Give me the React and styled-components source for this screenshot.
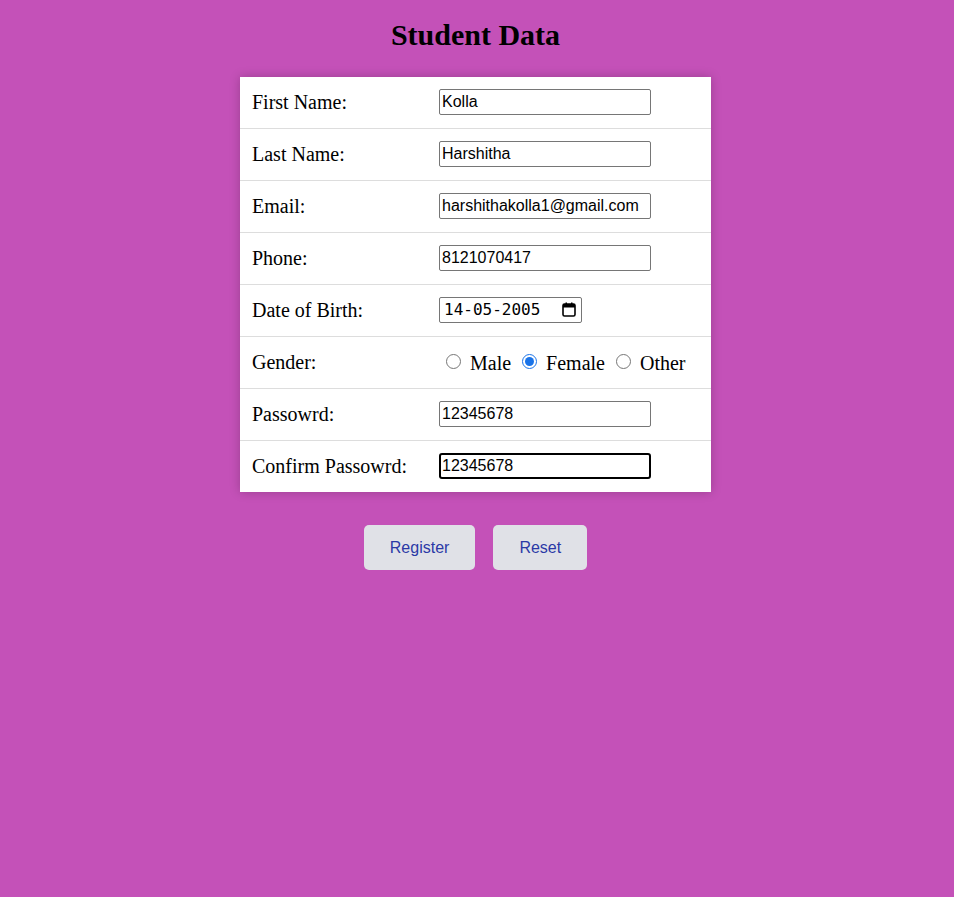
import styled, { createGlobalStyle } from 'styled-components';

const GlobalStyle = createGlobalStyle`
	html, body {
		margin: 0;
		padding: 0;
		background-color: #c451b8;
		font-family: 'Liberation Serif', 'Times New Roman', serif;
	}
`;

const Page = styled.div`
	min-height: 897px;
	display: flex;
	flex-direction: column;
	align-items: center;
	padding: 19px 3px 0 0;
	box-sizing: border-box;
`;

const Title = styled.h1`
	font-size: 30px;
	line-height: 32px;
	font-weight: bold;
	margin: 0 0 26px;
	color: black;
`;

const Card = styled.table`
	width: 471px;
	background-color: white;
	border-collapse: collapse;
	box-shadow: 0 0 10px rgba(0, 0, 0, 0.22);
`;

const Row = styled.tr`
	border-bottom: 1px solid #dddddd;
	&:last-child {
		border-bottom: none;
	}
`;

const Label = styled.td`
	width: 163px;
	padding: 0 12px;
	height: 51px;
	font-size: 20px;
	color: black;
	vertical-align: middle;
`;

const Field = styled.td`
	padding: 0 12px;
	vertical-align: middle;
`;

const TextInput = styled.input`
	display: block;
	box-sizing: border-box;
	width: 212px;
	height: 26px;
	padding: 1px 2px;
	font-family: 'Liberation Sans', Arial, sans-serif;
	font-size: 16px;
	color: black;
	border: ${(p) => (p.$active ? '2px solid black' : '1px solid #767676')};
	border-radius: ${(p) => (p.$active ? '3px' : '2px')};
	padding-left: ${(p) => (p.$active ? '1px' : '2px')};
	outline: none;
	margin-top: -2px;
`;

const DateBox = styled.div`
	box-sizing: border-box;
	width: 143px;
	height: 26px;
	margin-top: -2px;
	padding: 0 4px;
	display: flex;
	align-items: center;
	justify-content: space-between;
	border: 1px solid #767676;
	border-radius: 2px;
	font-family: 'DejaVu Sans Mono', 'Liberation Mono', monospace;
	font-size: 16px;
	color: black;

	svg {
		margin-right: 1px;
	}
`;

const RadioGroup = styled.div`
	display: flex;
	align-items: center;
	font-size: 20px;
	white-space: nowrap;
	margin-top: 2px;
`;

const RadioLabel = styled.label`
	display: flex;
	align-items: center;
	margin-right: 4px;

	input {
		margin: 0 9px 5px 7px;
		width: 15px;
		height: 15px;
		accent-color: #1a73e8;
	}
`;

const Buttons = styled.div`
	display: flex;
	gap: 18px;
	margin-top: 33px;
`;

const Button = styled.button`
	height: 45px;
	padding: 0 26px;
	border: none;
	border-radius: 5px;
	background-color: #e0e1e7;
	color: #2b39a6;
	font-family: 'Liberation Sans', Arial, sans-serif;
	font-size: 16px;
	cursor: pointer;
`;

const fields = [
	{ label: 'First Name:', value: 'Kolla' },
	{ label: 'Last Name:', value: 'Harshitha' },
	{ label: 'Email:', value: 'harshithakolla1@gmail.com' },
	{ label: 'Phone:', value: '8121070417' },
];

function CalendarIcon() {
	return (
		<svg width='14' height='15' viewBox='0 0 14 15'>
			<rect x='1' y='2' width='12' height='12' rx='1.5' fill='none' stroke='black' strokeWidth='1.6' />
			<rect x='1' y='2' width='12' height='3.5' fill='black' />
			<rect x='3.5' y='0.5' width='1.5' height='3' fill='black' />
			<rect x='9' y='0.5' width='1.5' height='3' fill='black' />
		</svg>
	);
}

export default function App() {
	return (
		<>
			<GlobalStyle />
			<Page>
				<Title>Student Data</Title>
				<Card>
					<tbody>
						{fields.map((f) => (
							<Row key={f.label}>
								<Label>{f.label}</Label>
								<Field>
									<TextInput type='text' defaultValue={f.value} />
								</Field>
							</Row>
						))}
						<Row>
							<Label>Date of Birth:</Label>
							<Field>
								<DateBox>
									<span>14-05-2005</span>
									<CalendarIcon />
								</DateBox>
							</Field>
						</Row>
						<Row>
							<Label>Gender:</Label>
							<Field>
								<RadioGroup>
									<RadioLabel>
										<input type='radio' name='gender' />
										Male
									</RadioLabel>
									<RadioLabel>
										<input type='radio' name='gender' defaultChecked />
										Female
									</RadioLabel>
									<RadioLabel>
										<input type='radio' name='gender' />
										Other
									</RadioLabel>
								</RadioGroup>
							</Field>
						</Row>
						<Row>
							<Label>Passowrd:</Label>
							<Field>
								<TextInput type='text' defaultValue='12345678' />
							</Field>
						</Row>
						<Row>
							<Label>Confirm Passowrd:</Label>
							<Field>
								<TextInput type='text' defaultValue='12345678' $active />
							</Field>
						</Row>
					</tbody>
				</Card>
				<Buttons>
					<Button type='button'>Register</Button>
					<Button type='button'>Reset</Button>
				</Buttons>
			</Page>
		</>
	);
}
